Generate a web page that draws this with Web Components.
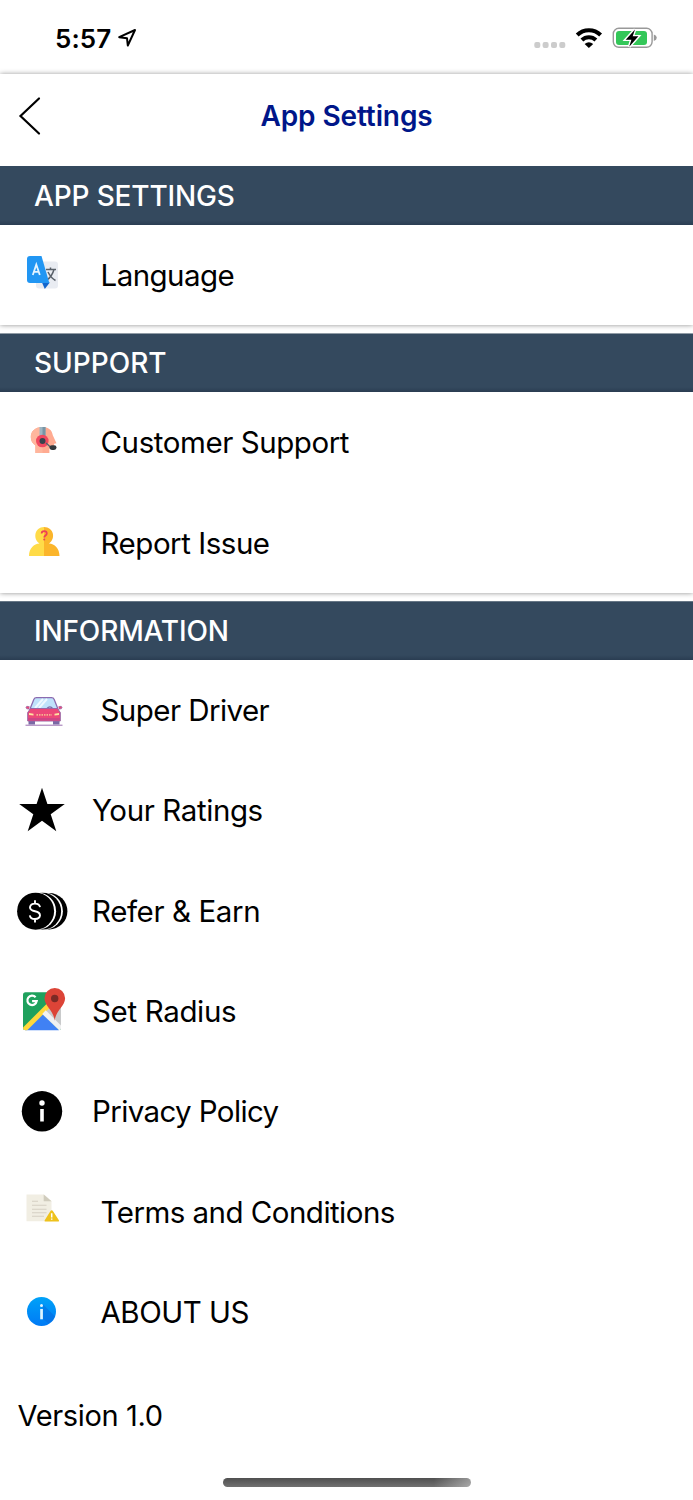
<!DOCTYPE html>
<html lang="en">
<head>
<meta charset="utf-8">
<title>App Settings</title>
<style>
    body {
        margin: 0;
        background: #fff;
        color: #000;
        font-family: Inter, "Liberation Sans", sans-serif;
    }
</style>
</head>
<body>
<settings-app>
    <status-bar slot="top">5:57</status-bar>
    <nav-header slot="top">App Settings</nav-header>

    <settings-section heading="APP SETTINGS" style="--head-track:-.15px">
        <settings-row icon="language" style="--track:-.55px">Language</settings-row>
    </settings-section>

    <settings-section heading="SUPPORT" style="--head-track:0px">
        <settings-row icon="support" style="--track:-.43px">Customer Support</settings-row>
        <settings-row icon="report" style="--track:-.47px">Report Issue</settings-row>
    </settings-section>

    <settings-section heading="INFORMATION" last style="--head-track:-.15px">
        <settings-row icon="car" style="--track:-.56px">Super Driver</settings-row>
        <settings-row icon="star" wide style="--track:-.4px">Your Ratings</settings-row>
        <settings-row icon="coins" wide style="--track:-.4px">Refer &amp; Earn</settings-row>
        <settings-row icon="map" wide style="--track:-.35px">Set Radius</settings-row>
        <settings-row icon="privacy" wide style="--track:-.62px">Privacy Policy</settings-row>
        <settings-row icon="terms" style="--track:-.53px">Terms and Conditions</settings-row>
        <settings-row icon="about" style="--track:-.48px">ABOUT US</settings-row>
    </settings-section>

    <app-version slot="bottom">Version 1.0</app-version>
    <home-indicator slot="bottom"></home-indicator>
</settings-app>

<script>
// every icon is drawn in an 84 x 100 cell, the full height of a row
const ICONS = {
    language: `
        <rect x="36" y="36.5" width="22" height="27" rx="3" fill="#e9ecf2"/>
        <path d="M46 44.500h10M50.500 42.500v2M54 44.500q-2 7-7 10.500M48 47q3 6 7.500 8.500" fill="none" stroke="#596069" stroke-width="1.5"/>
        <path d="M42 57.500h7.800l-5 6.500z" fill="#1266cd"/>
        <path d="M30 31h11.500l7.800 27H30q-3 0-3-3V34q0-3 3-3z" fill="#2196f3"/>
        <path d="M32.800 50l3.500-10.500L39.800 50M34 46.800h4.600" fill="none" stroke="#e4f4ff" stroke-width="1.800"/>`,
    support: `
        <path d="M42 35c-7 0-11.2 4.4-11.2 10 0 4 1.7 6.3 4.6 8.4V61h14v-4.2h4l.8-5 2.3-.5-3.7-8C52 38 48.5 35 42 35z" fill="#ffab91"/>
        <path d="M42.5 35c-7.5 0-11.7 4.4-11.7 10 0 4 1.7 6.3 4.6 8.4V61h7.1z" fill="#ffb69d"/>
        <path d="M39.5 35h6v11h-6z" fill="#9db5c2"/>
        <path d="M42.5 35h3v11h-3z" fill="#7895a5"/>
        <circle cx="42.3" cy="49" r="6.3" fill="#f1485f"/>
        <circle cx="42.5" cy="49" r="3" fill="#38434d"/>
        <path d="M46 51l5 4.5" stroke="#53626c" stroke-width="1.3"/>
        <rect x="49.5" y="53.2" width="7" height="4.8" rx="2.4" fill="#34393d"/>`,
    report: `
        <path d="M29 63c0-8 5-12 10.500-12.500-7-4.500-5-16.500 4.500-16.500v29z" fill="#ffdb48"/>
        <path d="M59.500 63c0-8-5-12-10.500-12.500 7-4.500 5-16.500-5-16.500v29z" fill="#fbb52b"/>
        <path d="M41.600 40.500c0-3.300 5.200-3.300 5.200 0 0 2-2.600 2-2.600 4" fill="none" stroke="#ee4056" stroke-width="1.700"/>
        <circle cx="44.200" cy="46.500" r="1" fill="#ee4056"/>`,
    car: `
        <path d="M25.500 65.200h37" stroke="#9a6fb0" stroke-width="1"/>
        <path d="M28.500 59.500h6.500v5h-6.500zM53 59.500h6.500v5H53z" fill="#7b68a5"/>
        <path d="M30 49l3.800-9.500q.7-1.800 2.700-1.800h15q2 0 2.700 1.800L58 49z" fill="#bfe3fb" stroke="#8c6bb0" stroke-width="1.300"/>
        <path d="M35 48l8-9M39 48l8-9" stroke="#eef9ff" stroke-width="2"/>
        <path d="M46.500 48.800q3.500-4 6.500 0" fill="none" stroke="#7d6ba8" stroke-width="1.200"/>
        <path d="M30.500 48.500h27l2.800 4v8.500H27.700v-8.500z" fill="#ec4778" stroke="#9868a5" stroke-width="1"/>
        <path d="M28.200 58h31.600v2.500H28.200z" fill="#cf4484"/>
        <path d="M29.500 46.800q-3.500-1.500-3.500.8 0 1.700 3 1.400M58.500 46.800q3.500-1.500 3.500.8 0 1.700-3 1.400" fill="#ec4778" stroke="#9868a5" stroke-width=".8"/>
        <path d="M29 53l4.500.8v1.700l-4.500-.500zM59 53l-4.500.8v1.700l4.500-.500z" fill="#ffe4a0"/>
        <path d="M36.500 54.800h15.500" stroke="#f6b48e" stroke-width="1.800" stroke-dasharray="1.500 1"/>`,
    star: `<path d="M42 27.800l5.400 16.300h17.400L50.700 54.300l5.600 16.900L42 60.800 27.700 71.200l5.600-16.900L19.200 44.100h17.400z"/>`,
    coins: `
        <circle cx="49.200" cy="50.200" r="18.200"/>
        <circle cx="44.400" cy="50.200" r="18.500" fill="#fff"/>
        <circle cx="42.700" cy="50.200" r="18.400"/>
        <circle cx="37.600" cy="50.200" r="18.500" fill="#fff"/>
        <circle cx="35.600" cy="50.200" r="18.500"/>
        <path d="M40 46.200q-.6-3.600-5-3.600t-5 3.600q0 3 5 4t5 4.200q-.4 3.600-5 3.600t-5.200-3.700M35 39.200v3.500M35 58v3.500" fill="none" stroke="#fff" stroke-width="1.900"/>`,
    map: `
        <clipPath id="tile"><rect x="23" y="31.200" width="38" height="38" rx="2.500"/></clipPath>
        <g clip-path="url(#tile)">
            <path d="M23 31h38v38H23z" fill="#1fa15d"/>
            <path d="M61 31v38L42 50z" fill="#c9cacb"/>
            <path d="M42.300 52.500L61 71H23z" fill="#4081f4"/>
            <path d="M22 67.500l30-30 3.500 3.500L26 70.500z" fill="#ffd83b"/>
            <path d="M42.200 53l3.500-3.700L63 66.500V73z" fill="#f1f1f2"/>
        </g>
        <path d="M35.600 36.200a4.700 4.700 0 1 0 1.100 3.900h-4.600" fill="none" stroke="#fff" stroke-width="2.200"/>
        <path d="M54.700 59.800c-.7-10-10.200-14.600-10.200-22.600a10.300 10.300 0 0 1 20.600 0c0 8-9.700 12.600-10.400 22.600z" fill="#dc4437"/>
        <circle cx="54.700" cy="37.500" r="3.700" fill="#7b2a25"/>`,
    privacy: `
        <circle cx="42" cy="50.300" r="20.200"/>
        <circle cx="42" cy="42" r="2.700" fill="#fff"/>
        <path d="M40.200 48h3.600v12.500h-3.600z" fill="#fff"/>`,
    terms: `
        <path d="M26.500 32.500H44l7.500 6.500v20.300h-25z" fill="#f1eee3"/>
        <path d="M43.700 32.500l7.800 6.800h-7.800z" fill="#d0ccbd"/>
        <path d="M32 39.200h6M32 43.200h14.500M32 47.200h14.500M32 50.700h14.500M32 54.200h12" stroke="#d5d0c4" stroke-width="1.100"/>
        <path d="M51.700 48.300q.8 0 1.200.7l6 9.200q.7 1.300-.7 1.300H45.400q-1.400 0-.7-1.300l5.800-9.200q.4-.7 1.200-.7z" fill="#eec21c"/>
        <path d="M51.700 51.300v4.200M51.700 56.500v1.300" stroke="#fff" stroke-width="1.500"/>`,
    about: `
        <linearGradient id="disc" x2="0" y2="1"><stop stop-color="#00a2f8"/><stop offset="1" stop-color="#007af5"/></linearGradient>
        <circle cx="41.500" cy="49.500" r="14.500" fill="url(#disc)"/>
        <path d="M43 42.500L55 54.500a14.500 14.500 0 0 1-6.500 7L43 57z" fill="#0868dc" opacity=".5"/>
        <circle cx="41.500" cy="43.600" r="1.500" fill="#e2f4ff"/>
        <path d="M40.200 47h2.700v10.300h-2.700z" fill="#e2f4ff"/>`
};

customElements.define('settings-app', class extends HTMLElement {
    constructor() {
        super();
        this.attachShadow({mode: 'open'}).innerHTML = `
        <style>
            :host { display: flex; flex-direction: column; height: 1500px; overflow: hidden; }
            .content { display: flex; flex-direction: column; gap: 8.400px; }
            .bottom { display: flex; flex: 1; flex-direction: column; justify-content: space-between; }
        </style>
        <slot name="top"></slot>
        <div class="content"><slot></slot></div>
        <div class="bottom"><slot name="bottom"></slot></div>`;
    }
});

customElements.define('status-bar', class extends HTMLElement {
    constructor() {
        super();
        this.attachShadow({mode: 'open'}).innerHTML = `
        <style>
            :host {
                display: flex;
                justify-content: space-between;
                box-sizing: border-box;
                height: 74px;
                padding: 0 36px 0 55px;
                background: #fff;
            }
            .time {
                display: flex;
                align-items: center;
                height: 76px;
                gap: 7px;
                font-size: 26px;
                font-weight: 600;
                letter-spacing: .1px;
            }
            svg { display: block; }
        </style>
        <div class="time">
            <slot></slot>
            <svg width="20" height="20" viewBox="0 0 20 20"><path d="M1.200 9.200L17 2 9.800 17.500 9 10.200z" fill="none" stroke="#000" stroke-width="2" stroke-linejoin="round"/></svg>
        </div>
        <svg width="124" height="74" viewBox="533 0 124 74">
            <g fill="#ccc">
                <rect x="534.300" y="42" width="6" height="6" rx="2"/><rect x="542.600" y="42" width="6" height="6" rx="2"/>
                <rect x="551" y="42" width="6" height="6" rx="2"/><rect x="559.300" y="42" width="6" height="6" rx="2"/>
            </g>
            <g fill="none" stroke="#000" stroke-width="4">
                <path d="M577.200 35a16.600 16.600 0 0 1 23.400 0"/>
                <path d="M581.900 40a10 10 0 0 1 14 0"/>
            </g>
            <path d="M584.600 43.900q4.300-3.500 8.600 0L588.900 48z"/>
            <rect x="613.300" y="28.300" width="38.800" height="19" rx="5.500" fill="#fff" stroke="#999" stroke-width="1.400"/>
            <rect x="616" y="31" width="31" height="14" rx="3" fill="#34c759"/>
            <path d="M653.800 34.500q3 1 3 3.300t-3 3.300z" fill="#999"/>
            <path d="M635 29.500l-9.300 10.200h5.700l-2.200 7 9.200-10.400h-5.700z" stroke="#fff" stroke-width="2.800"/>
            <path d="M635 29.500l-9.300 10.200h5.700l-2.200 7 9.200-10.400h-5.700z"/>
        </svg>`;
    }
});

customElements.define('nav-header', class extends HTMLElement {
    constructor() {
        super();
        this.attachShadow({mode: 'open'}).innerHTML = `
        <style>
            :host {
                display: grid;
                grid-template-columns: 60px 1fr 60px;
                align-items: center;
                height: 92px;
                background: #fff;
                box-shadow: 0 0 5px rgba(0, 0, 0, .4);
                clip-path: inset(-6px 0 0);
            }
            .title {
                padding-bottom: 9px;
                text-align: center;
                color: #001689;
                font-size: 28px;
                font-weight: 600;
                letter-spacing: -.1px;
            }
            svg { display: block; }
        </style>
        <svg width="60" height="92" viewBox="0 0 60 92"><path d="M39 24.500L20.500 42 39 59.500" fill="none" stroke="#000" stroke-width="2.200" stroke-linecap="round"/></svg>
        <div class="title"><slot></slot></div>`;
    }
});

customElements.define('settings-section', class extends HTMLElement {
    constructor() {
        super();
        this.attachShadow({mode: 'open'}).innerHTML = `
        <style>
            :host { display: block; background: #fff; box-shadow: 0 0 5px rgba(0, 0, 0, .45); clip-path: inset(0 0 -6px); }
            :host([last]) { box-shadow: none; }
            h2 {
                box-sizing: border-box;
                height: 58.600px;
                margin: 0;
                padding-left: 34px;
                background: linear-gradient(#34495e 54px, #2a3d52);
                color: #fff;
                font-size: 28px;
                font-weight: 500;
                line-height: 60px;
                letter-spacing: var(--head-track, 0);
            }
        </style>
        <h2>${this.getAttribute('heading')}</h2>
        <slot></slot>`;
    }
});

customElements.define('settings-row', class extends HTMLElement {
    constructor() {
        super();
        this.attachShadow({mode: 'open'}).innerHTML = `
        <style>
            :host {
                display: flex;
                align-items: center;
                gap: 16.500px;
                height: 100.400px;
                font-size: 29.500px;
                letter-spacing: var(--track, 0);
                white-space: nowrap;
            }
            :host([wide]) { gap: 8px; }
            svg { display: block; flex: none; }
        </style>
        <svg width="84" height="100" viewBox="0 0 84 100">${ICONS[this.getAttribute('icon')]}</svg>
        <span><slot></slot></span>`;
    }
});

customElements.define('app-version', class extends HTMLElement {
    constructor() {
        super();
        this.attachShadow({mode: 'open'}).innerHTML = `
        <style>
            :host { display: block; padding: 33.500px 0 0 17.500px; font-size: 29px; line-height: 40px; letter-spacing: -.35px; }
        </style>
        <slot></slot>`;
    }
});

customElements.define('home-indicator', class extends HTMLElement {
    constructor() {
        super();
        this.attachShadow({mode: 'open'}).innerHTML = `
        <style>
            :host { display: flex; justify-content: center; padding-bottom: 13.500px; }
            div {
                width: 248px;
                height: 8.500px;
                border-radius: 5px;
                background: linear-gradient(90deg, transparent 85%, rgba(255, 255, 255, .4)), linear-gradient(#505050, #707070);
            }
        </style>
        <div></div>`;
    }
});
</script>
</body>
</html>
